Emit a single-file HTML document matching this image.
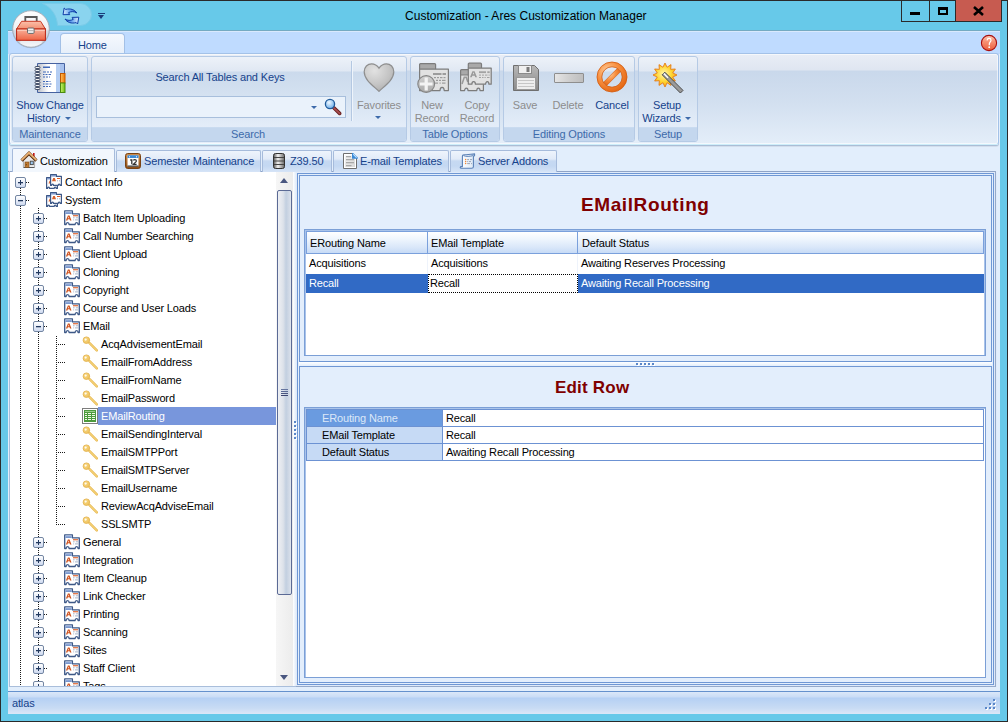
<!DOCTYPE html>
<html><head><meta charset="utf-8">
<style>
*{box-sizing:border-box;margin:0;padding:0}
html,body{width:1008px;height:722px;overflow:hidden}
body{position:relative;background:#67c9e9;font-family:"Liberation Sans",sans-serif;font-size:11px;color:#000;letter-spacing:-0.15px}
.a{position:absolute}
.t{position:absolute;white-space:nowrap;line-height:13px}
.grp{position:absolute;top:56px;height:86px;border:1px solid #b5cae5;border-radius:3px;background:linear-gradient(#edf2f9 0,#e0e8f3 14px,#cbdaec 15px,#d5e2f1 40px,#e4edf9 70px)}
.gl{position:absolute;left:0;right:0;bottom:0;height:14px;background:#c4d7ee;border-top:1px solid #c9dbf0;border-radius:0 0 2px 2px}
.glt{position:absolute;left:0;right:0;bottom:0px;text-align:center;color:#3d6aaa;line-height:13px;white-space:nowrap}
.bt{position:absolute;white-space:nowrap;line-height:13px;color:#15428b;text-align:center}
.dis{color:#8d8d8d}
.dtab{position:absolute;top:150px;height:22px;border:1px solid #a6bbdb;border-bottom:none;border-radius:2px 2px 0 0;background:linear-gradient(#eef4fc 0,#e2ebf8 8px,#c6d9f2 10px,#c4d8f2 15px,#d6e4f7 21px)}
.dtt{position:absolute;top:155px;white-space:nowrap;line-height:13px;color:#15428b}
.dv{position:absolute;width:1px;background:repeating-linear-gradient(#1a1a1a 0 1px,transparent 1px 2px)}
.dh{position:absolute;height:1px;background:repeating-linear-gradient(90deg,#1a1a1a 0 1px,transparent 1px 2px)}
.bx{position:absolute;width:11px;height:11px;border:1px solid #7386a2;border-radius:2px;background:linear-gradient(#ffffff,#cfdaf0)}
.bx .ph{position:absolute;left:2px;top:4px;width:5px;height:1px;background:#22395f;box-shadow:0 0.3px 0 #22395f}
.bx .pv{position:absolute;left:4px;top:2px;width:1px;height:5px;background:#22395f}
.ic{position:absolute}
.tt{position:absolute;white-space:nowrap;line-height:13px}
.sel{position:absolute;height:18px;background:#7896dc}


</style></head><body>
<!-- frame borders -->
<div class="a" style="left:0;top:0;width:1008px;height:1px;background:#2a2a2a"></div>
<div class="a" style="left:0;top:0;width:1px;height:722px;background:#2a2a2a"></div>
<div class="a" style="left:1007px;top:0;width:1px;height:722px;background:#2a2a2a"></div>
<div class="a" style="left:0;top:721px;width:1008px;height:1px;background:#2a2a2a"></div>

<!-- title -->
<div class="t" style="left:405px;top:10px;font-size:12px;color:#000;letter-spacing:0.02px">Customization - Ares Customization Manager</div>

<!-- window buttons -->
<div class="a" style="left:901px;top:0;width:29px;height:22px;border:1px solid #2a2a2a;border-top:none"></div>
<div class="a" style="left:929px;top:0;width:27px;height:22px;border:1px solid #2a2a2a;border-top:none;border-left:none"></div>
<div class="a" style="left:955px;top:0;width:47px;height:22px;background:#c75b50;border:1px solid #2a2a2a;border-top:none"></div>


<div class="a" style="left:910px;top:12px;width:10px;height:3px;background:#000"></div>
<div class="a" style="left:938px;top:7px;width:10px;height:8px;border:2px solid #000;border-top-width:3px"></div>
<svg class="a" style="left:973px;top:6px" width="11" height="10" viewBox="0 0 11 10"><path d="M1 1l9 8M10 1L1 9" stroke="#000" stroke-width="2.6"/></svg>
<!-- client -->
<div class="a" style="left:8px;top:31px;width:992px;height:683px;background:#e2eefc"></div>
<!-- ribbon tab strip -->
<div class="a" style="left:8px;top:31px;width:992px;height:23px;background:#bfdbff"></div>


<!-- ribbon tab strip light top line -->
<div class="a" style="left:8px;top:30px;width:992px;height:1px;background:#74aac2"></div>
<div class="a" style="left:8px;top:31px;width:992px;height:1px;background:#d9e9fd"></div>
<!-- QAT pill -->
<svg class="a" style="left:0;top:0" width="100" height="30" viewBox="0 0 100 30"><path d="M42.4 3.5H80.5A11 11 0 0 1 80.5 25.5H57.5C57 16 52 7.5 42.4 3.5Z" fill="#8ad4ef" stroke="#7acbe8" stroke-width="1"/></svg>
<!-- app orb -->
<svg class="a" style="left:11px;top:9px" width="40" height="40" viewBox="0 0 40 40">
 <defs>
  <linearGradient id="orb" x1="0" y1="0" x2="0" y2="1"><stop offset="0" stop-color="#ffffff"/><stop offset=".5" stop-color="#eef1f4"/><stop offset=".55" stop-color="#d4dbe4"/><stop offset=".8" stop-color="#c7d0dc"/><stop offset="1" stop-color="#f0f3f6"/></linearGradient>
 </defs>
 <circle cx="20" cy="20.5" r="18.8" fill="#7f8fa3" opacity=".45"/>
 <circle cx="20" cy="20" r="18.3" fill="url(#orb)" stroke="#a7b0bb" stroke-width="1"/>
 <ellipse cx="20" cy="33" rx="11" ry="4" fill="#ffffff" opacity=".55"/>
</svg>
<svg class="a" style="left:14px;top:13px" width="34" height="32" viewBox="0 0 34 32">
 <defs><linearGradient id="tbg" x1="0" y1="0" x2="0" y2="1"><stop offset="0" stop-color="#f9b09a"/><stop offset="1" stop-color="#ee6444"/></linearGradient>
 <linearGradient id="tbl" x1="0" y1="0" x2="0" y2="1"><stop offset="0" stop-color="#fbc0aa"/><stop offset="1" stop-color="#f39072"/></linearGradient></defs>
 <path d="M11.3 8.5V4H22.7V8.5" fill="none" stroke="#5a5a5a" stroke-width="1.8"/>
 <path d="M2.6 16L7.6 8.3H26.6L31.4 16Z" fill="url(#tbl)" stroke="#c83a24" stroke-width="1"/>
 <rect x="2.6" y="16" width="28.8" height="11.3" fill="url(#tbg)" stroke="#b8200f" stroke-width="1"/>
 <line x1="3.2" y1="17.3" x2="30.8" y2="17.3" stroke="#fcd0c0" stroke-width="1"/>
 <rect x="13.5" y="15" width="6.6" height="5.4" rx="1" fill="#f4f4f4" stroke="#6a6a6a" stroke-width="1"/>
 <line x1="14" y1="17.7" x2="19.6" y2="17.7" stroke="#9a9a9a" stroke-width=".8"/>
</svg>
<!-- refresh icon -->
<svg class="a" style="left:62px;top:7px" width="18" height="19" viewBox="0 0 18 19">
 <defs><linearGradient id="rf" x1="0" y1="0" x2="1" y2="0"><stop offset="0" stop-color="#d8ecff"/><stop offset=".5" stop-color="#6aa6ee"/><stop offset="1" stop-color="#2a62c8"/></linearGradient>
 <linearGradient id="rf2" x1="1" y1="0" x2="0" y2="0"><stop offset="0" stop-color="#d8ecff"/><stop offset=".5" stop-color="#6aa6ee"/><stop offset="1" stop-color="#2a62c8"/></linearGradient></defs>
 <path d="M2.2 1 L1 7.7 L7.7 7.6 L6.6 5.6 C9 4.2 12.5 4.3 14.8 6 C12.5 2.5 8.5 1.2 3.6 2.4 Z" fill="url(#rf)" stroke="#0f3ea8" stroke-width="1" stroke-linejoin="round"/>
 <path d="M15.6 17 L16.8 10.2 L10.1 10.4 L11.2 12.4 C8.8 13.8 5.3 13.7 3 12 C5.3 15.5 9.3 16.8 14.2 15.6 Z" fill="url(#rf2)" stroke="#0f3ea8" stroke-width="1" stroke-linejoin="round"/>
</svg>
<!-- qat dropdown -->
<div class="a" style="left:98px;top:13px;width:7px;height:1px;background:#1a3c7a"></div>
<div class="a" style="left:98px;top:15px;width:0;height:0;border-left:3.5px solid transparent;border-right:3.5px solid transparent;border-top:4px solid #1a3c7a"></div>

<!-- Home tab -->
<div class="a" style="left:60px;top:33px;width:65px;height:22px;border:1px solid #a3c0e6;border-bottom:none;border-radius:4px 4px 0 0;background:linear-gradient(#f5f9fe,#e6eef9)"></div>
<div class="t" style="left:78px;top:39px;color:#15428b">Home</div>

<!-- help icon -->
<svg class="a" style="left:980px;top:34px" width="18" height="18" viewBox="0 0 18 18">
 <defs><linearGradient id="hg" x1="0" y1="0" x2="0" y2="1"><stop offset="0" stop-color="#ffd0bc"/><stop offset=".35" stop-color="#f8967a"/><stop offset="1" stop-color="#ec5c3a"/></linearGradient></defs>
 <circle cx="9" cy="9" r="7.6" fill="url(#hg)" stroke="#a80e0e" stroke-width="1.1"/>
 <path d="M7 6.3C7.2 5 8 4.4 9.1 4.4S11 5.1 11 6.2c0 1.5-1.7 1.9-1.7 3.9v1.2" fill="none" stroke="#fff" stroke-width="1.2"/>
 <circle cx="9.2" cy="13.2" r=".9" fill="#fff"/>
</svg>

<!-- ribbon panel -->
<div class="a" style="left:9px;top:53px;width:990px;height:92px;border:1px solid #a4c2e8;border-bottom-color:#cdeefa;border-radius:3px;box-shadow:inset 0 0 0 1px rgba(255,255,255,.6),0 1px 0 #aabdd6,0 2px 0 #d3deec;background:linear-gradient(#e9eef6 0,#dfe6f1 16px,#c9d8eb 17px,#d3e0f0 50px,#e4eef9 90px)"></div>


<!-- Maintenance group -->
<div class="grp" style="left:12px;width:76px"><div class="gl"><div class="glt">Maintenance</div></div></div>
<svg class="a" style="left:34px;top:62px" width="32" height="32" viewBox="0 0 32 32">
 <defs><linearGradient id="nb" x1="0" y1="0" x2="1" y2="0"><stop offset="0" stop-color="#b9bec8"/><stop offset=".4" stop-color="#ffffff"/><stop offset="1" stop-color="#ffffff"/></linearGradient>
 <linearGradient id="nbo" x1="0" y1="0" x2="1" y2="0"><stop offset="0" stop-color="#ffc060"/><stop offset="1" stop-color="#f07800"/></linearGradient>
 <linearGradient id="nbg" x1="0" y1="0" x2="1" y2="0"><stop offset="0" stop-color="#c8f070"/><stop offset="1" stop-color="#70c010"/></linearGradient></defs>
 <path d="M3.5 1.5H30.5V11H26V30.5H3.5Z" fill="url(#nb)" stroke="#4662a0" stroke-width="1"/>
 <rect x="22" y="2" width="4" height="28" fill="#b4cdf2"/>
 <rect x="26" y="2" width="4" height="9" fill="#a8c2ee"/>
 <rect x="26.5" y="11.5" width="4.5" height="9.5" fill="url(#nbo)" stroke="#c25a00" stroke-width="1"/>
 <rect x="26.5" y="21" width="4.5" height="9.5" fill="url(#nbg)" stroke="#4a8a10" stroke-width="1"/>
 <g fill="#f4f4f4" stroke="#3a4660" stroke-width=".9">
  <rect x="1" y="4.5" width="5" height="2" rx="1"/><rect x="1" y="7.5" width="5" height="2" rx="1"/><rect x="1" y="10.5" width="5" height="2" rx="1"/><rect x="1" y="13.5" width="5" height="2" rx="1"/><rect x="1" y="16.5" width="5" height="2" rx="1"/><rect x="1" y="19.5" width="5" height="2" rx="1"/><rect x="1" y="22.5" width="5" height="2" rx="1"/><rect x="1" y="25.5" width="5" height="2" rx="1"/>
 </g>
 <g fill="#3f68b8"><rect x="9" y="4.5" width="7" height="1.5"/>
  <rect x="9" y="9.5" width="3" height="1"/><rect x="13" y="9.5" width="2" height="1"/><rect x="16" y="9.5" width="2" height="1"/>
  <rect x="9" y="12" width="1.5" height="1"/><rect x="11.5" y="12" width="2" height="1"/><rect x="14.5" y="12" width="2.5" height="1"/>
  <rect x="9" y="14.5" width="2" height="1"/><rect x="12" y="14.5" width="2" height="1"/><rect x="15" y="14.5" width="1" height="1"/>
  <rect x="9" y="19" width="2" height="1"/><rect x="12" y="19" width="2.5" height="1"/><rect x="15.5" y="19" width="1" height="1"/>
  <rect x="9" y="21.5" width="1.5" height="1"/><rect x="11.5" y="21.5" width="3" height="1"/><rect x="15.5" y="21.5" width="2" height="1"/>
  <rect x="9" y="24" width="2" height="1"/><rect x="12" y="24" width="2" height="1"/><rect x="15" y="24" width="1.5" height="1"/>
 </g>
</svg>
<div class="bt" style="left:12px;width:76px;top:99px">Show Change</div>
<div class="bt" style="left:26px;width:35px;top:112px">History</div>
<div class="a" style="left:65px;top:117px;width:0;height:0;border-left:3px solid transparent;border-right:3px solid transparent;border-top:3px solid #3d6aaa"></div>

<!-- Search group -->
<div class="grp" style="left:91px;width:316px"><div class="gl"><div class="glt" style="left:0;width:312px">Search</div></div></div>
<div class="bt" style="left:100px;width:240px;top:71px">Search All Tables and Keys</div>
<div class="a" style="left:96px;top:96px;width:250px;height:22px;border:1px solid #a8bfdc;background:#eaf2fb"></div>
<div class="a" style="left:311px;top:106px;width:0;height:0;border-left:3px solid transparent;border-right:3px solid transparent;border-top:3px solid #3d6aaa"></div>
<svg class="a" style="left:324px;top:98px" width="18" height="18" viewBox="0 0 18 18">
 <defs><radialGradient id="mg" cx=".4" cy=".35" r=".65"><stop offset="0" stop-color="#f0f8ff"/><stop offset="1" stop-color="#6fb0ea"/></radialGradient>
 <linearGradient id="mh" x1="0" y1="0" x2="1" y2="0"><stop offset="0" stop-color="#c88080"/><stop offset="1" stop-color="#7a2a2a"/></linearGradient></defs>
 <path d="M9.8 9.8L15.6 15.4" stroke="#6a2020" stroke-width="3.6" stroke-linecap="round"/>
 <path d="M9.8 9.8L15.6 15.4" stroke="#a85050" stroke-width="1.6" stroke-linecap="round"/>
 <circle cx="6" cy="6" r="4.6" fill="url(#mg)" stroke="#1f5a9a" stroke-width="1.3"/>
</svg>
<div class="a" style="left:351px;top:61px;width:1px;height:60px;background:#b4c8e2"></div>
<div class="a" style="left:352px;top:61px;width:1px;height:60px;background:#eef4fb"></div>
<svg class="a" style="left:362px;top:62px" width="34" height="30" viewBox="0 0 34 30">
 <defs><radialGradient id="hgr" cx=".35" cy=".25" r=".85"><stop offset="0" stop-color="#e2e2e2"/><stop offset=".6" stop-color="#c4c4c4"/><stop offset="1" stop-color="#aaaaaa"/></radialGradient></defs>
 <path d="M17 29.4C11.5 24 2.2 18 2.2 9.8 2.2 5 5.6 1.8 9.6 1.8c3.2 0 5.7 1.8 7.4 4.3C18.7 3.6 21.2 1.8 24.4 1.8c4 0 7.4 3.2 7.4 8 0 8.2-9.3 14.2-14.8 19.6z" fill="url(#hgr)" stroke="#8e8e8e" stroke-width="1.2"/>
</svg>
<div class="bt dis" style="left:354px;width:50px;top:99px">Favorites</div>
<div class="a" style="left:375px;top:116px;width:0;height:0;border-left:3px solid transparent;border-right:3px solid transparent;border-top:3px solid #3d6aaa"></div>

<!-- Table Options -->
<div class="grp" style="left:410px;width:90px"><div class="gl"><div class="glt">Table Options</div></div></div>
<svg class="a" style="left:416px;top:62px" width="34" height="34" viewBox="0 0 34 34">
 <defs><linearGradient id="pc" x1="0" y1="0" x2="0" y2="1"><stop offset="0" stop-color="#d2d2d2"/><stop offset="1" stop-color="#a9a9a9"/></linearGradient></defs>
 <path d="M3.6 7.5V2.6Q3.6 1.6 4.6 1.6H18.6Q19.6 1.6 19.6 2.6V7.5" fill="#a9a9a9" stroke="#7c7c7c" stroke-width="1.2"/>
 <path d="M3.6 7.2H32.4V28.6H28.2C28.2 24.2 24 24.2 24 28.6H3.6Z" fill="#e2e2e2" stroke="#7c7c7c" stroke-width="1.2" stroke-linejoin="round"/>
 <g fill="#9c9c9c"><rect x="17" y="11" width="8.5" height="2"/><rect x="26.5" y="11" width="3.5" height="2"/>
 <rect x="18" y="15" width="2" height="1.2"/><rect x="21" y="15" width="2" height="1.2"/><rect x="24" y="15" width="2.5" height="1.2"/><rect x="27.5" y="15" width="2" height="1.2"/>
 <rect x="20" y="17.8" width="2" height="1.2"/><rect x="23" y="17.8" width="2" height="1.2"/><rect x="26" y="17.8" width="3.5" height="1.2"/>
 <rect x="19" y="20.5" width="3" height="1.2"/><rect x="23.5" y="20.5" width="1.2" height="1.2"/><rect x="26" y="20.5" width="3.5" height="1.2"/></g>
 <circle cx="10.2" cy="22" r="8.4" fill="url(#pc)" stroke="#858585" stroke-width="1.1"/>
 <path d="M8.6 15.6H11.8V20.4H16.6V23.6H11.8V28.4H8.6V23.6H3.8V20.4H8.6Z" fill="#f4f4f4"/>
</svg>
<svg class="a" style="left:459px;top:62px" width="34" height="32" viewBox="0 0 34 32">
 <path d="M1.6 13.2V8.6Q1.6 7.6 2.6 7.6H9.6V13.2" fill="#a9a9a9" stroke="#7c7c7c" stroke-width="1.2"/>
 <path d="M1.6 13H24.4V28.6H21C21 25.4 17.8 25.4 17.8 28.6H9C9 25.4 5.6 25.4 5.6 28.6H1.6Z" fill="#e2e2e2" stroke="#7c7c7c" stroke-width="1.2" stroke-linejoin="round"/>
 <path d="M3 22L5.3 15.3H7.2L8.8 20" fill="none" stroke="#9a9a9a" stroke-width="1.6"/>
 <path d="M9.3 6.2V2.2Q9.3 1.2 10.3 1.2H21.5Q22.5 1.2 22.5 2.2V6.2" fill="#a9a9a9" stroke="#7c7c7c" stroke-width="1.2"/>
 <path d="M9.3 6.1H32.2V22.2H29.9C29.9 18.8 26.6 18.8 26.6 22.2H16.4C16.4 18.8 12.9 18.8 12.9 22.2H9.3Z" fill="#e2e2e2" stroke="#7c7c7c" stroke-width="1.2" stroke-linejoin="round"/>
 <path d="M11 15.2L13.4 9.2H15.6L18 15.2H16.2L15.7 13.8H13.3L12.8 15.2ZM13.8 12.3H15.2L14.5 10.3Z" fill="#9a9a9a"/>
 <g fill="#a2a2a2"><rect x="20" y="9.3" width="7" height="1.8"/><rect x="28.3" y="9.3" width="2.4" height="1.8"/>
 <rect x="20" y="12.6" width="2" height="1"/><rect x="23" y="12.6" width="2" height="1"/><rect x="26" y="12.6" width="2.5" height="1"/><rect x="29.5" y="12.6" width="1.2" height="1"/>
 <rect x="20" y="15" width="2" height="1"/><rect x="23" y="15" width="1.5" height="1"/><rect x="25.5" y="15" width="1.2" height="1"/><rect x="28" y="15" width="2.5" height="1"/></g>
</svg>
<div class="bt dis" style="left:412px;width:40px;top:99px">New</div>
<div class="bt dis" style="left:412px;width:40px;top:112px">Record</div>
<div class="bt dis" style="left:457px;width:40px;top:99px">Copy</div>
<div class="bt dis" style="left:457px;width:40px;top:112px">Record</div>

<!-- Editing Options -->
<div class="grp" style="left:503px;width:132px"><div class="gl"><div class="glt">Editing Options</div></div></div>
<svg class="a" style="left:512px;top:64px" width="28" height="28" viewBox="0 0 28 28">
 <defs><linearGradient id="fl" x1="0" y1="0" x2="0" y2="1"><stop offset="0" stop-color="#b8b8b8"/><stop offset="1" stop-color="#8a8a8a"/></linearGradient></defs>
 <path d="M1.5 1.5h21l4 4v21h-25z" fill="url(#fl)" stroke="#6f6f6f" stroke-width="1"/>
 <rect x="6.5" y="1.5" width="13" height="8" fill="#f0f0f0" stroke="#8a8a8a" stroke-width="1"/>
 <rect x="14.5" y="3" width="3" height="5" fill="#7a7a7a"/>
 <rect x="4.5" y="13.5" width="19" height="12" fill="#eeeeee" stroke="#9a9a9a" stroke-width="1"/>
 <g fill="#c6c6c6"><rect x="6" y="16" width="16" height="1"/><rect x="6" y="19" width="16" height="1"/><rect x="6" y="22" width="16" height="1"/></g>
</svg>
<div class="a" style="left:554px;top:73px;width:30px;height:10px;border:1px solid #8e8e8e;border-radius:1px;background:linear-gradient(100deg,#e6e6e6,#cfcfcf 50%,#bdbdbd)"></div>
<svg class="a" style="left:596px;top:61px" width="32" height="32" viewBox="0 0 32 32">
 <defs><radialGradient id="cg" cx=".35" cy=".3" r=".8"><stop offset="0" stop-color="#ffd0a0"/><stop offset=".45" stop-color="#f89040"/><stop offset="1" stop-color="#e0600c"/></radialGradient></defs>
 <path d="M16 1A15 15 0 1 0 16 31A15 15 0 1 0 16 1ZM16 5.8A10.2 10.2 0 1 1 16 26.2A10.2 10.2 0 1 1 16 5.8Z" fill="url(#cg)" fill-rule="evenodd" stroke="#d2580a" stroke-width=".8"/>
 <path d="M7.6 21.2L21.2 7.6L24.4 10.8L10.8 24.4Z" fill="url(#cg)" stroke="#d2580a" stroke-width=".6"/>
</svg>
<div class="bt dis" style="left:505px;width:40px;top:99px">Save</div>
<div class="bt dis" style="left:547px;width:42px;top:99px">Delete</div>
<div class="bt" style="left:591px;width:42px;top:99px">Cancel</div>

<!-- Setup -->
<div class="grp" style="left:638px;width:60px"><div class="gl"><div class="glt">Setup</div></div></div>
<svg class="a" style="left:651px;top:62px" width="34" height="32" viewBox="0 0 34 32">
 <defs><radialGradient id="sg" cx=".45" cy=".45" r=".6"><stop offset="0" stop-color="#fff8b0"/><stop offset=".55" stop-color="#ffd530"/><stop offset="1" stop-color="#f5a010"/></radialGradient></defs>
 <path d="M14.00 1.00L16.07 5.27L20.00 2.61L19.66 7.34L24.39 7.00L21.73 10.93L26.00 13.00L21.73 15.07L24.39 19.00L19.66 18.66L20.00 23.39L16.07 20.73L14.00 25.00L11.93 20.73L8.00 23.39L8.34 18.66L3.61 19.00L6.27 15.07L2.00 13.00L6.27 10.93L3.61 7.00L8.34 7.34L8.00 2.61L11.93 5.27Z" fill="url(#sg)" stroke="#e47a18" stroke-width=".9" stroke-linejoin="round"/>
 <path d="M11.2 12.8L13.8 10.2L32 28.4L29.4 31Z" fill="#9a9a9a" stroke="#4a4a4a" stroke-width="1"/>
 <path d="M12.3 12.1L13.3 11.1L17.5 15.3L16.5 16.3Z" fill="#ffffff"/>
</svg>
<div class="bt" style="left:638px;width:58px;top:99px">Setup</div>
<div class="bt" style="left:642px;width:39px;top:112px">Wizards</div>
<div class="a" style="left:685px;top:117px;width:0;height:0;border-left:3px solid transparent;border-right:3px solid transparent;border-top:3px solid #3d6aaa"></div>

<!-- doc tab strip area -->


<!-- doc tabs -->
<div class="a" style="left:8px;top:171px;width:988px;height:1px;background:#8fa3c6"></div>
<div class="a" style="left:12px;top:148px;width:103px;height:24px;border:1px solid #a6bbdb;border-bottom:none;border-radius:2px 2px 0 0;background:#f2f7fd"></div>
<svg class="a" style="left:20px;top:151px" width="18" height="18" viewBox="0 0 18 18">
 <rect x="13" y="2" width="1.6" height="5" fill="#c41414"/>
 <path d="M3.2 8.6L9 3.2L14.8 8.6V16.5H3.2Z" fill="#ebebeb"/>
 <path d="M3.4 16.5H14.6" stroke="#5a5a5a" stroke-width="1"/>
 <path d="M3.4 8.6V16.2M14.6 8.6V16.2" stroke="#9a9a9a" stroke-width=".8"/>
 <path d="M1.6 9.6L9 2.3L16.4 9.6" fill="none" stroke="#5a3010" stroke-width="3.2" stroke-linejoin="miter"/>
 <path d="M1.6 9.1L9 1.8L16.4 9.1" fill="none" stroke="#eab274" stroke-width="1.8" stroke-linejoin="miter"/>
 <rect x="5" y="11" width="4" height="5.5" fill="#c07a30" stroke="#7a4a18" stroke-width=".6"/>
 <rect x="5.8" y="13.4" width="1" height=".8" fill="#3a2208"/>
 <rect x="10.3" y="10.2" width="3" height="3.4" fill="#9cc8f0" stroke="#4a4a4a" stroke-width=".9"/>
</svg>
<div class="t" style="left:40px;top:155px;color:#000">Customization</div>

<div class="dtab" style="left:116px;width:145px"></div>
<svg class="a" style="left:125px;top:153px" width="16" height="16" viewBox="0 0 16 16">
 <defs><linearGradient id="calg" x1="0" y1="0" x2="0" y2="1"><stop offset="0" stop-color="#d09050"/><stop offset="1" stop-color="#8a4a14"/></linearGradient></defs>
 <rect x=".5" y=".5" width="15" height="15" rx="2.2" fill="url(#calg)" stroke="#7a4212" stroke-width="1"/>
 <rect x="2.5" y="2.5" width="11" height="11" fill="#ffffff"/>
 <rect x="2.5" y="2.3" width="11" height="2.8" rx=".6" fill="#3a8ad8"/>
 <rect x="4" y="3.3" width="1" height="1" fill="#fff"/><rect x="11" y="3.3" width="1" height="1" fill="#fff"/>
 <rect x="2.5" y="12.5" width="11" height="1.2" fill="#3a3a3a"/>
 <path d="M5.2 7h1.6v4.3" fill="none" stroke="#333" stroke-width="1.3"/>
 <path d="M8.3 7.4c.4-.6 1-.8 1.6-.8.9 0 1.5.5 1.5 1.3 0 1.2-1.9 1.8-3.1 3.4h3.3" fill="none" stroke="#333" stroke-width="1.2"/>
</svg>
<div class="dtt" style="left:144px">Semester Maintenance</div>

<div class="dtab" style="left:262px;width:70px"></div>
<svg class="a" style="left:271px;top:153px" width="16" height="16" viewBox="0 0 16 16">
 <defs><linearGradient id="db" x1="0" y1="0" x2="1" y2="0"><stop offset="0" stop-color="#555"/><stop offset=".4" stop-color="#f4f4f4"/><stop offset="1" stop-color="#666"/></linearGradient></defs>
 <rect x="2.5" y=".5" width="11" height="15" rx="2" fill="url(#db)" stroke="#333" stroke-width="1"/>
 <g stroke="#444" stroke-width="1"><line x1="3" y1="4.5" x2="13" y2="4.5"/><line x1="3" y1="8" x2="13" y2="8"/><line x1="3" y1="11.5" x2="13" y2="11.5"/></g>
</svg>
<div class="dtt" style="left:290px">Z39.50</div>

<div class="dtab" style="left:333px;width:116px"></div>
<svg class="a" style="left:342px;top:153px" width="16" height="16" viewBox="0 0 16 16">
 <defs><linearGradient id="dcg" x1="0" y1="0" x2="1" y2="1"><stop offset="0" stop-color="#f4f4f4"/><stop offset="1" stop-color="#d8d8d8"/></linearGradient></defs>
 <path d="M1.5 0.5H10.5L14.5 4.5V15.5H1.5Z" fill="#ffffff" stroke="#6e6e6e" stroke-width="1"/>
 <rect x="3" y="2.5" width="10" height="11.5" fill="url(#dcg)"/>
 <g fill="#a8a8a8"><rect x="4" y="3" width="5" height="1.3"/><rect x="4" y="6" width="8" height="1.3"/><rect x="4" y="9" width="8" height="1.3"/><rect x="4" y="12" width="5.5" height="1.3"/></g>
 <path d="M10 0H11.2L15.8 4.6V5.8H10Z" fill="#3a8ad8"/>
 <path d="M11.2 1.2L14.6 4.6" stroke="#c4e4ff" stroke-width="1.1"/>
</svg>
<div class="dtt" style="left:360px">E-mail Templates</div>

<div class="dtab" style="left:450px;width:107px"></div>
<svg class="a" style="left:459px;top:153px" width="17" height="16" viewBox="0 0 17 16">
 <defs><linearGradient id="scg" x1="0" y1="0" x2="1" y2="0"><stop offset="0" stop-color="#ffffff"/><stop offset="1" stop-color="#dce8f6"/></linearGradient></defs>
 <path d="M3.4 13.6V3.4C3.4 2.2 4.4 1.6 6 1.7C9.5 2 12.5 1 15.6 0.9V2.6C14.6 2.8 14.4 3.4 14.4 4.2V13.8C14.4 14.8 13.8 15.2 12.6 15.2H1.9C1.1 15.2 0.9 13.6 2.2 13.6Z" fill="url(#scg)" stroke="#5a80b6" stroke-width="1.1" stroke-linejoin="round"/>
 <path d="M4.5 2.6C7 3.8 11 3.4 14.4 2.6" fill="none" stroke="#5a80b6" stroke-width="1"/>
 <g fill="#f28a3a"><circle cx="6.6" cy="6.6" r=".75"/><circle cx="6.6" cy="8.6" r=".75"/><circle cx="6.6" cy="10.6" r=".75"/></g>
 <g fill="#9aa6b8"><rect x="8.2" y="6.1" width="1.8" height="1"/><rect x="11" y="6.1" width="2" height="1"/><rect x="8.2" y="8.1" width="1" height="1"/><rect x="10" y="8.1" width="2" height="1"/><rect x="8.2" y="10.1" width="2.8" height="1"/><rect x="12" y="10.1" width="1" height="1"/></g>
</svg>
<div class="dtt" style="left:478px">Server Addons</div>

<!-- tree panel -->
<div class="a" style="left:9px;top:171px;width:1px;height:516px;background:#a9bedb"></div>
<div class="a" style="left:9px;top:686px;width:287px;height:1px;background:#a9bedb"></div>
<div class="a" style="left:10px;top:172px;width:266px;height:514px;background:#fff;overflow:hidden">
<!--TREE-->
<div class="dv" style="left:10px;top:10px;height:518px"></div>
<div class="dv" style="left:28px;top:36px;height:492px"></div>
<div class="dv" style="left:46px;top:164px;height:189px"></div>
<div class="dh" style="left:16px;top:10px;width:3px"></div>
<div class="bx" style="left:5px;top:5px"><i class="ph"></i><i class="pv"></i></div>
<svg class="ic" style="left:36px;top:2px" width="16" height="16" viewBox="0 0 16 16">
   <path d="M0.6 3.6H4.8V5.2H11.4V14.4H10.2C10.2 12.6 8.2 12.6 8.2 14.4H3.6C3.6 12.6 1.6 12.6 1.6 14.4H0.6Z" fill="#fff" stroke="#3d5887" stroke-width="1.2" stroke-linejoin="round"/>
   <rect x="1.2" y="4.2" width="3" height="1.2" fill="#6d8cc8"/>
   <path d="M2.5 9.5L3.5 6.8H4.5L4.5 9.5Z" fill="#d86a3a"/>
   <path d="M4.6 0.6H10.4V2.4H15.4V11.4H14.2C14.2 9.6 12.2 9.6 12.2 11.4H7.6C7.6 9.6 5.6 9.6 5.6 11.4H4.6Z" fill="#fff" stroke="#3d5887" stroke-width="1.2" stroke-linejoin="round"/>
   <rect x="5.2" y="1.2" width="4.6" height="1.3" fill="#6d8cc8"/>
   <path d="M6 7.3L7.2 4.1H8.8L10 7.3Z" fill="#d8602a"/>
   <rect x="11" y="4" width="3.4" height="1" fill="#dd5a22"/>
   <g fill="#a0abc0"><rect x="11" y="6.3" width="1" height="1"/><rect x="13" y="6.3" width="1" height="1"/></g>
  </svg>
<div class="tt" style="left:55px;top:4px">Contact Info</div>
<div class="dh" style="left:16px;top:28px;width:3px"></div>
<div class="bx" style="left:5px;top:23px"><i class="ph"></i></div>
<svg class="ic" style="left:36px;top:20px" width="16" height="16" viewBox="0 0 16 16">
   <path d="M0.6 3.6H4.8V5.2H11.4V14.4H10.2C10.2 12.6 8.2 12.6 8.2 14.4H3.6C3.6 12.6 1.6 12.6 1.6 14.4H0.6Z" fill="#fff" stroke="#3d5887" stroke-width="1.2" stroke-linejoin="round"/>
   <rect x="1.2" y="4.2" width="3" height="1.2" fill="#6d8cc8"/>
   <path d="M2.5 9.5L3.5 6.8H4.5L4.5 9.5Z" fill="#d86a3a"/>
   <path d="M4.6 0.6H10.4V2.4H15.4V11.4H14.2C14.2 9.6 12.2 9.6 12.2 11.4H7.6C7.6 9.6 5.6 9.6 5.6 11.4H4.6Z" fill="#fff" stroke="#3d5887" stroke-width="1.2" stroke-linejoin="round"/>
   <rect x="5.2" y="1.2" width="4.6" height="1.3" fill="#6d8cc8"/>
   <path d="M6 7.3L7.2 4.1H8.8L10 7.3Z" fill="#d8602a"/>
   <rect x="11" y="4" width="3.4" height="1" fill="#dd5a22"/>
   <g fill="#a0abc0"><rect x="11" y="6.3" width="1" height="1"/><rect x="13" y="6.3" width="1" height="1"/></g>
  </svg>
<div class="tt" style="left:55px;top:22px">System</div>
<div class="dh" style="left:34px;top:46px;width:3px"></div>
<div class="bx" style="left:23px;top:41px"><i class="ph"></i><i class="pv"></i></div>
<svg class="ic" style="left:54px;top:38px" width="16" height="16" viewBox="0 0 16 16"><g transform="translate(0,-0.8)">
   <path d="M0.7 1.7H8.4V4.6H15.3V15.3H14.1C14.1 12.8 11.1 12.8 11.1 15.3H5.1C5.1 12.8 2.1 12.8 2.1 15.3H0.7Z" fill="#fff" stroke="#3d5887" stroke-width="1.3" stroke-linejoin="round"/>
   <rect x="1.4" y="2.4" width="6.3" height="2.3" fill="url(#tabg)"/>
   <path d="M1.9 11.2L3.9 6.2H5.5L7.5 11.2H6L5.6 10.1H3.8L3.4 11.2ZM4.1 9H5.3L4.7 7.4Z" fill="#d0501a"/>
   <rect x="9" y="6" width="5" height="1.1" fill="#dd5a22"/>
   <g fill="#a9b4c8"><rect x="9" y="8.1" width="1.6" height="1"/><rect x="11.8" y="8.1" width="2.2" height="1"/><rect x="9.2" y="10.2" width="0.9" height="1"/><rect x="11" y="10.2" width="3" height="1"/></g>
  </g></svg>
<div class="tt" style="left:73px;top:40px">Batch Item Uploading</div>
<div class="dh" style="left:34px;top:64px;width:3px"></div>
<div class="bx" style="left:23px;top:59px"><i class="ph"></i><i class="pv"></i></div>
<svg class="ic" style="left:54px;top:56px" width="16" height="16" viewBox="0 0 16 16"><g transform="translate(0,-0.8)">
   <path d="M0.7 1.7H8.4V4.6H15.3V15.3H14.1C14.1 12.8 11.1 12.8 11.1 15.3H5.1C5.1 12.8 2.1 12.8 2.1 15.3H0.7Z" fill="#fff" stroke="#3d5887" stroke-width="1.3" stroke-linejoin="round"/>
   <rect x="1.4" y="2.4" width="6.3" height="2.3" fill="url(#tabg)"/>
   <path d="M1.9 11.2L3.9 6.2H5.5L7.5 11.2H6L5.6 10.1H3.8L3.4 11.2ZM4.1 9H5.3L4.7 7.4Z" fill="#d0501a"/>
   <rect x="9" y="6" width="5" height="1.1" fill="#dd5a22"/>
   <g fill="#a9b4c8"><rect x="9" y="8.1" width="1.6" height="1"/><rect x="11.8" y="8.1" width="2.2" height="1"/><rect x="9.2" y="10.2" width="0.9" height="1"/><rect x="11" y="10.2" width="3" height="1"/></g>
  </g></svg>
<div class="tt" style="left:73px;top:58px">Call Number Searching</div>
<div class="dh" style="left:34px;top:82px;width:3px"></div>
<div class="bx" style="left:23px;top:77px"><i class="ph"></i><i class="pv"></i></div>
<svg class="ic" style="left:54px;top:74px" width="16" height="16" viewBox="0 0 16 16"><g transform="translate(0,-0.8)">
   <path d="M0.7 1.7H8.4V4.6H15.3V15.3H14.1C14.1 12.8 11.1 12.8 11.1 15.3H5.1C5.1 12.8 2.1 12.8 2.1 15.3H0.7Z" fill="#fff" stroke="#3d5887" stroke-width="1.3" stroke-linejoin="round"/>
   <rect x="1.4" y="2.4" width="6.3" height="2.3" fill="url(#tabg)"/>
   <path d="M1.9 11.2L3.9 6.2H5.5L7.5 11.2H6L5.6 10.1H3.8L3.4 11.2ZM4.1 9H5.3L4.7 7.4Z" fill="#d0501a"/>
   <rect x="9" y="6" width="5" height="1.1" fill="#dd5a22"/>
   <g fill="#a9b4c8"><rect x="9" y="8.1" width="1.6" height="1"/><rect x="11.8" y="8.1" width="2.2" height="1"/><rect x="9.2" y="10.2" width="0.9" height="1"/><rect x="11" y="10.2" width="3" height="1"/></g>
  </g></svg>
<div class="tt" style="left:73px;top:76px">Client Upload</div>
<div class="dh" style="left:34px;top:100px;width:3px"></div>
<div class="bx" style="left:23px;top:95px"><i class="ph"></i><i class="pv"></i></div>
<svg class="ic" style="left:54px;top:92px" width="16" height="16" viewBox="0 0 16 16"><g transform="translate(0,-0.8)">
   <path d="M0.7 1.7H8.4V4.6H15.3V15.3H14.1C14.1 12.8 11.1 12.8 11.1 15.3H5.1C5.1 12.8 2.1 12.8 2.1 15.3H0.7Z" fill="#fff" stroke="#3d5887" stroke-width="1.3" stroke-linejoin="round"/>
   <rect x="1.4" y="2.4" width="6.3" height="2.3" fill="url(#tabg)"/>
   <path d="M1.9 11.2L3.9 6.2H5.5L7.5 11.2H6L5.6 10.1H3.8L3.4 11.2ZM4.1 9H5.3L4.7 7.4Z" fill="#d0501a"/>
   <rect x="9" y="6" width="5" height="1.1" fill="#dd5a22"/>
   <g fill="#a9b4c8"><rect x="9" y="8.1" width="1.6" height="1"/><rect x="11.8" y="8.1" width="2.2" height="1"/><rect x="9.2" y="10.2" width="0.9" height="1"/><rect x="11" y="10.2" width="3" height="1"/></g>
  </g></svg>
<div class="tt" style="left:73px;top:94px">Cloning</div>
<div class="dh" style="left:34px;top:118px;width:3px"></div>
<div class="bx" style="left:23px;top:113px"><i class="ph"></i><i class="pv"></i></div>
<svg class="ic" style="left:54px;top:110px" width="16" height="16" viewBox="0 0 16 16"><g transform="translate(0,-0.8)">
   <path d="M0.7 1.7H8.4V4.6H15.3V15.3H14.1C14.1 12.8 11.1 12.8 11.1 15.3H5.1C5.1 12.8 2.1 12.8 2.1 15.3H0.7Z" fill="#fff" stroke="#3d5887" stroke-width="1.3" stroke-linejoin="round"/>
   <rect x="1.4" y="2.4" width="6.3" height="2.3" fill="url(#tabg)"/>
   <path d="M1.9 11.2L3.9 6.2H5.5L7.5 11.2H6L5.6 10.1H3.8L3.4 11.2ZM4.1 9H5.3L4.7 7.4Z" fill="#d0501a"/>
   <rect x="9" y="6" width="5" height="1.1" fill="#dd5a22"/>
   <g fill="#a9b4c8"><rect x="9" y="8.1" width="1.6" height="1"/><rect x="11.8" y="8.1" width="2.2" height="1"/><rect x="9.2" y="10.2" width="0.9" height="1"/><rect x="11" y="10.2" width="3" height="1"/></g>
  </g></svg>
<div class="tt" style="left:73px;top:112px">Copyright</div>
<div class="dh" style="left:34px;top:136px;width:3px"></div>
<div class="bx" style="left:23px;top:131px"><i class="ph"></i><i class="pv"></i></div>
<svg class="ic" style="left:54px;top:128px" width="16" height="16" viewBox="0 0 16 16"><g transform="translate(0,-0.8)">
   <path d="M0.7 1.7H8.4V4.6H15.3V15.3H14.1C14.1 12.8 11.1 12.8 11.1 15.3H5.1C5.1 12.8 2.1 12.8 2.1 15.3H0.7Z" fill="#fff" stroke="#3d5887" stroke-width="1.3" stroke-linejoin="round"/>
   <rect x="1.4" y="2.4" width="6.3" height="2.3" fill="url(#tabg)"/>
   <path d="M1.9 11.2L3.9 6.2H5.5L7.5 11.2H6L5.6 10.1H3.8L3.4 11.2ZM4.1 9H5.3L4.7 7.4Z" fill="#d0501a"/>
   <rect x="9" y="6" width="5" height="1.1" fill="#dd5a22"/>
   <g fill="#a9b4c8"><rect x="9" y="8.1" width="1.6" height="1"/><rect x="11.8" y="8.1" width="2.2" height="1"/><rect x="9.2" y="10.2" width="0.9" height="1"/><rect x="11" y="10.2" width="3" height="1"/></g>
  </g></svg>
<div class="tt" style="left:73px;top:130px">Course and User Loads</div>
<div class="dh" style="left:34px;top:154px;width:3px"></div>
<div class="bx" style="left:23px;top:149px"><i class="ph"></i></div>
<svg class="ic" style="left:54px;top:146px" width="16" height="16" viewBox="0 0 16 16"><g transform="translate(0,-0.8)">
   <path d="M0.7 1.7H8.4V4.6H15.3V15.3H14.1C14.1 12.8 11.1 12.8 11.1 15.3H5.1C5.1 12.8 2.1 12.8 2.1 15.3H0.7Z" fill="#fff" stroke="#3d5887" stroke-width="1.3" stroke-linejoin="round"/>
   <rect x="1.4" y="2.4" width="6.3" height="2.3" fill="url(#tabg)"/>
   <path d="M1.9 11.2L3.9 6.2H5.5L7.5 11.2H6L5.6 10.1H3.8L3.4 11.2ZM4.1 9H5.3L4.7 7.4Z" fill="#d0501a"/>
   <rect x="9" y="6" width="5" height="1.1" fill="#dd5a22"/>
   <g fill="#a9b4c8"><rect x="9" y="8.1" width="1.6" height="1"/><rect x="11.8" y="8.1" width="2.2" height="1"/><rect x="9.2" y="10.2" width="0.9" height="1"/><rect x="11" y="10.2" width="3" height="1"/></g>
  </g></svg>
<div class="tt" style="left:73px;top:148px">EMail</div>
<div class="dh" style="left:46px;top:172px;width:9px"></div>
<svg class="ic" style="left:72px;top:164px" width="16" height="16" viewBox="0 0 16 16">
   
   <path d="M7.6 7.2L14.8 14.4" stroke="#e6b650" stroke-width="2.4" stroke-linecap="round"/>
   <path d="M7.6 7.2L14.8 14.4" stroke="#f6d47a" stroke-width="1.2" stroke-linecap="round"/>
   <circle cx="4.4" cy="4.2" r="3.3" fill="url(#kg)" stroke="#e2b04a" stroke-width=".8"/>
   <circle cx="3.7" cy="3.6" r="1.1" fill="#fffaf0"/>
  </svg>
<div class="tt" style="left:91px;top:166px">AcqAdvisementEmail</div>
<div class="dh" style="left:46px;top:190px;width:9px"></div>
<svg class="ic" style="left:72px;top:182px" width="16" height="16" viewBox="0 0 16 16">
   
   <path d="M7.6 7.2L14.8 14.4" stroke="#e6b650" stroke-width="2.4" stroke-linecap="round"/>
   <path d="M7.6 7.2L14.8 14.4" stroke="#f6d47a" stroke-width="1.2" stroke-linecap="round"/>
   <circle cx="4.4" cy="4.2" r="3.3" fill="url(#kg)" stroke="#e2b04a" stroke-width=".8"/>
   <circle cx="3.7" cy="3.6" r="1.1" fill="#fffaf0"/>
  </svg>
<div class="tt" style="left:91px;top:184px">EmailFromAddress</div>
<div class="dh" style="left:46px;top:208px;width:9px"></div>
<svg class="ic" style="left:72px;top:200px" width="16" height="16" viewBox="0 0 16 16">
   
   <path d="M7.6 7.2L14.8 14.4" stroke="#e6b650" stroke-width="2.4" stroke-linecap="round"/>
   <path d="M7.6 7.2L14.8 14.4" stroke="#f6d47a" stroke-width="1.2" stroke-linecap="round"/>
   <circle cx="4.4" cy="4.2" r="3.3" fill="url(#kg)" stroke="#e2b04a" stroke-width=".8"/>
   <circle cx="3.7" cy="3.6" r="1.1" fill="#fffaf0"/>
  </svg>
<div class="tt" style="left:91px;top:202px">EmailFromName</div>
<div class="dh" style="left:46px;top:226px;width:9px"></div>
<svg class="ic" style="left:72px;top:218px" width="16" height="16" viewBox="0 0 16 16">
   
   <path d="M7.6 7.2L14.8 14.4" stroke="#e6b650" stroke-width="2.4" stroke-linecap="round"/>
   <path d="M7.6 7.2L14.8 14.4" stroke="#f6d47a" stroke-width="1.2" stroke-linecap="round"/>
   <circle cx="4.4" cy="4.2" r="3.3" fill="url(#kg)" stroke="#e2b04a" stroke-width=".8"/>
   <circle cx="3.7" cy="3.6" r="1.1" fill="#fffaf0"/>
  </svg>
<div class="tt" style="left:91px;top:220px">EmailPassword</div>
<div class="dh" style="left:46px;top:244px;width:9px"></div>
<svg class="ic" style="left:72px;top:236px" width="16" height="16" viewBox="0 0 16 16"><rect x=".5" y=".5" width="15" height="15" fill="#fff" stroke="#7d7d7d" stroke-width="1"/><rect x="2" y="2" width="12" height="12" fill="#4c9a3c"/><rect x="3" y="3" width="10" height="1" fill="#9ccc8a"/><g fill="#f2f8e8"><rect x="3" y="5" width="2" height="1"/><rect x="6" y="5" width="3" height="1"/><rect x="10" y="5" width="3" height="1"/><rect x="3" y="7" width="2" height="1"/><rect x="6" y="7" width="3" height="1"/><rect x="10" y="7" width="3" height="1"/><rect x="3" y="9" width="2" height="1"/><rect x="6" y="9" width="3" height="1"/><rect x="10" y="9" width="3" height="1"/><rect x="3" y="11" width="2" height="1"/><rect x="6" y="11" width="3" height="1"/><rect x="10" y="11" width="3" height="1"/></g></svg>
<div class="sel" style="left:88px;top:235px;width:178px"></div>
<div class="tt" style="left:91px;top:238px;color:#fff">EMailRouting</div>
<div class="dh" style="left:46px;top:262px;width:9px"></div>
<svg class="ic" style="left:72px;top:254px" width="16" height="16" viewBox="0 0 16 16">
   
   <path d="M7.6 7.2L14.8 14.4" stroke="#e6b650" stroke-width="2.4" stroke-linecap="round"/>
   <path d="M7.6 7.2L14.8 14.4" stroke="#f6d47a" stroke-width="1.2" stroke-linecap="round"/>
   <circle cx="4.4" cy="4.2" r="3.3" fill="url(#kg)" stroke="#e2b04a" stroke-width=".8"/>
   <circle cx="3.7" cy="3.6" r="1.1" fill="#fffaf0"/>
  </svg>
<div class="tt" style="left:91px;top:256px">EmailSendingInterval</div>
<div class="dh" style="left:46px;top:280px;width:9px"></div>
<svg class="ic" style="left:72px;top:272px" width="16" height="16" viewBox="0 0 16 16">
   
   <path d="M7.6 7.2L14.8 14.4" stroke="#e6b650" stroke-width="2.4" stroke-linecap="round"/>
   <path d="M7.6 7.2L14.8 14.4" stroke="#f6d47a" stroke-width="1.2" stroke-linecap="round"/>
   <circle cx="4.4" cy="4.2" r="3.3" fill="url(#kg)" stroke="#e2b04a" stroke-width=".8"/>
   <circle cx="3.7" cy="3.6" r="1.1" fill="#fffaf0"/>
  </svg>
<div class="tt" style="left:91px;top:274px">EmailSMTPPort</div>
<div class="dh" style="left:46px;top:298px;width:9px"></div>
<svg class="ic" style="left:72px;top:290px" width="16" height="16" viewBox="0 0 16 16">
   
   <path d="M7.6 7.2L14.8 14.4" stroke="#e6b650" stroke-width="2.4" stroke-linecap="round"/>
   <path d="M7.6 7.2L14.8 14.4" stroke="#f6d47a" stroke-width="1.2" stroke-linecap="round"/>
   <circle cx="4.4" cy="4.2" r="3.3" fill="url(#kg)" stroke="#e2b04a" stroke-width=".8"/>
   <circle cx="3.7" cy="3.6" r="1.1" fill="#fffaf0"/>
  </svg>
<div class="tt" style="left:91px;top:292px">EmailSMTPServer</div>
<div class="dh" style="left:46px;top:316px;width:9px"></div>
<svg class="ic" style="left:72px;top:308px" width="16" height="16" viewBox="0 0 16 16">
   
   <path d="M7.6 7.2L14.8 14.4" stroke="#e6b650" stroke-width="2.4" stroke-linecap="round"/>
   <path d="M7.6 7.2L14.8 14.4" stroke="#f6d47a" stroke-width="1.2" stroke-linecap="round"/>
   <circle cx="4.4" cy="4.2" r="3.3" fill="url(#kg)" stroke="#e2b04a" stroke-width=".8"/>
   <circle cx="3.7" cy="3.6" r="1.1" fill="#fffaf0"/>
  </svg>
<div class="tt" style="left:91px;top:310px">EmailUsername</div>
<div class="dh" style="left:46px;top:334px;width:9px"></div>
<svg class="ic" style="left:72px;top:326px" width="16" height="16" viewBox="0 0 16 16">
   
   <path d="M7.6 7.2L14.8 14.4" stroke="#e6b650" stroke-width="2.4" stroke-linecap="round"/>
   <path d="M7.6 7.2L14.8 14.4" stroke="#f6d47a" stroke-width="1.2" stroke-linecap="round"/>
   <circle cx="4.4" cy="4.2" r="3.3" fill="url(#kg)" stroke="#e2b04a" stroke-width=".8"/>
   <circle cx="3.7" cy="3.6" r="1.1" fill="#fffaf0"/>
  </svg>
<div class="tt" style="left:91px;top:328px">ReviewAcqAdviseEmail</div>
<div class="dh" style="left:46px;top:352px;width:9px"></div>
<svg class="ic" style="left:72px;top:344px" width="16" height="16" viewBox="0 0 16 16">
   
   <path d="M7.6 7.2L14.8 14.4" stroke="#e6b650" stroke-width="2.4" stroke-linecap="round"/>
   <path d="M7.6 7.2L14.8 14.4" stroke="#f6d47a" stroke-width="1.2" stroke-linecap="round"/>
   <circle cx="4.4" cy="4.2" r="3.3" fill="url(#kg)" stroke="#e2b04a" stroke-width=".8"/>
   <circle cx="3.7" cy="3.6" r="1.1" fill="#fffaf0"/>
  </svg>
<div class="tt" style="left:91px;top:346px">SSLSMTP</div>
<div class="dh" style="left:34px;top:370px;width:3px"></div>
<div class="bx" style="left:23px;top:365px"><i class="ph"></i><i class="pv"></i></div>
<svg class="ic" style="left:54px;top:362px" width="16" height="16" viewBox="0 0 16 16"><g transform="translate(0,-0.8)">
   <path d="M0.7 1.7H8.4V4.6H15.3V15.3H14.1C14.1 12.8 11.1 12.8 11.1 15.3H5.1C5.1 12.8 2.1 12.8 2.1 15.3H0.7Z" fill="#fff" stroke="#3d5887" stroke-width="1.3" stroke-linejoin="round"/>
   <rect x="1.4" y="2.4" width="6.3" height="2.3" fill="url(#tabg)"/>
   <path d="M1.9 11.2L3.9 6.2H5.5L7.5 11.2H6L5.6 10.1H3.8L3.4 11.2ZM4.1 9H5.3L4.7 7.4Z" fill="#d0501a"/>
   <rect x="9" y="6" width="5" height="1.1" fill="#dd5a22"/>
   <g fill="#a9b4c8"><rect x="9" y="8.1" width="1.6" height="1"/><rect x="11.8" y="8.1" width="2.2" height="1"/><rect x="9.2" y="10.2" width="0.9" height="1"/><rect x="11" y="10.2" width="3" height="1"/></g>
  </g></svg>
<div class="tt" style="left:73px;top:364px">General</div>
<div class="dh" style="left:34px;top:388px;width:3px"></div>
<div class="bx" style="left:23px;top:383px"><i class="ph"></i><i class="pv"></i></div>
<svg class="ic" style="left:54px;top:380px" width="16" height="16" viewBox="0 0 16 16"><g transform="translate(0,-0.8)">
   <path d="M0.7 1.7H8.4V4.6H15.3V15.3H14.1C14.1 12.8 11.1 12.8 11.1 15.3H5.1C5.1 12.8 2.1 12.8 2.1 15.3H0.7Z" fill="#fff" stroke="#3d5887" stroke-width="1.3" stroke-linejoin="round"/>
   <rect x="1.4" y="2.4" width="6.3" height="2.3" fill="url(#tabg)"/>
   <path d="M1.9 11.2L3.9 6.2H5.5L7.5 11.2H6L5.6 10.1H3.8L3.4 11.2ZM4.1 9H5.3L4.7 7.4Z" fill="#d0501a"/>
   <rect x="9" y="6" width="5" height="1.1" fill="#dd5a22"/>
   <g fill="#a9b4c8"><rect x="9" y="8.1" width="1.6" height="1"/><rect x="11.8" y="8.1" width="2.2" height="1"/><rect x="9.2" y="10.2" width="0.9" height="1"/><rect x="11" y="10.2" width="3" height="1"/></g>
  </g></svg>
<div class="tt" style="left:73px;top:382px">Integration</div>
<div class="dh" style="left:34px;top:406px;width:3px"></div>
<div class="bx" style="left:23px;top:401px"><i class="ph"></i><i class="pv"></i></div>
<svg class="ic" style="left:54px;top:398px" width="16" height="16" viewBox="0 0 16 16"><g transform="translate(0,-0.8)">
   <path d="M0.7 1.7H8.4V4.6H15.3V15.3H14.1C14.1 12.8 11.1 12.8 11.1 15.3H5.1C5.1 12.8 2.1 12.8 2.1 15.3H0.7Z" fill="#fff" stroke="#3d5887" stroke-width="1.3" stroke-linejoin="round"/>
   <rect x="1.4" y="2.4" width="6.3" height="2.3" fill="url(#tabg)"/>
   <path d="M1.9 11.2L3.9 6.2H5.5L7.5 11.2H6L5.6 10.1H3.8L3.4 11.2ZM4.1 9H5.3L4.7 7.4Z" fill="#d0501a"/>
   <rect x="9" y="6" width="5" height="1.1" fill="#dd5a22"/>
   <g fill="#a9b4c8"><rect x="9" y="8.1" width="1.6" height="1"/><rect x="11.8" y="8.1" width="2.2" height="1"/><rect x="9.2" y="10.2" width="0.9" height="1"/><rect x="11" y="10.2" width="3" height="1"/></g>
  </g></svg>
<div class="tt" style="left:73px;top:400px">Item Cleanup</div>
<div class="dh" style="left:34px;top:424px;width:3px"></div>
<div class="bx" style="left:23px;top:419px"><i class="ph"></i><i class="pv"></i></div>
<svg class="ic" style="left:54px;top:416px" width="16" height="16" viewBox="0 0 16 16"><g transform="translate(0,-0.8)">
   <path d="M0.7 1.7H8.4V4.6H15.3V15.3H14.1C14.1 12.8 11.1 12.8 11.1 15.3H5.1C5.1 12.8 2.1 12.8 2.1 15.3H0.7Z" fill="#fff" stroke="#3d5887" stroke-width="1.3" stroke-linejoin="round"/>
   <rect x="1.4" y="2.4" width="6.3" height="2.3" fill="url(#tabg)"/>
   <path d="M1.9 11.2L3.9 6.2H5.5L7.5 11.2H6L5.6 10.1H3.8L3.4 11.2ZM4.1 9H5.3L4.7 7.4Z" fill="#d0501a"/>
   <rect x="9" y="6" width="5" height="1.1" fill="#dd5a22"/>
   <g fill="#a9b4c8"><rect x="9" y="8.1" width="1.6" height="1"/><rect x="11.8" y="8.1" width="2.2" height="1"/><rect x="9.2" y="10.2" width="0.9" height="1"/><rect x="11" y="10.2" width="3" height="1"/></g>
  </g></svg>
<div class="tt" style="left:73px;top:418px">Link Checker</div>
<div class="dh" style="left:34px;top:442px;width:3px"></div>
<div class="bx" style="left:23px;top:437px"><i class="ph"></i><i class="pv"></i></div>
<svg class="ic" style="left:54px;top:434px" width="16" height="16" viewBox="0 0 16 16"><g transform="translate(0,-0.8)">
   <path d="M0.7 1.7H8.4V4.6H15.3V15.3H14.1C14.1 12.8 11.1 12.8 11.1 15.3H5.1C5.1 12.8 2.1 12.8 2.1 15.3H0.7Z" fill="#fff" stroke="#3d5887" stroke-width="1.3" stroke-linejoin="round"/>
   <rect x="1.4" y="2.4" width="6.3" height="2.3" fill="url(#tabg)"/>
   <path d="M1.9 11.2L3.9 6.2H5.5L7.5 11.2H6L5.6 10.1H3.8L3.4 11.2ZM4.1 9H5.3L4.7 7.4Z" fill="#d0501a"/>
   <rect x="9" y="6" width="5" height="1.1" fill="#dd5a22"/>
   <g fill="#a9b4c8"><rect x="9" y="8.1" width="1.6" height="1"/><rect x="11.8" y="8.1" width="2.2" height="1"/><rect x="9.2" y="10.2" width="0.9" height="1"/><rect x="11" y="10.2" width="3" height="1"/></g>
  </g></svg>
<div class="tt" style="left:73px;top:436px">Printing</div>
<div class="dh" style="left:34px;top:460px;width:3px"></div>
<div class="bx" style="left:23px;top:455px"><i class="ph"></i><i class="pv"></i></div>
<svg class="ic" style="left:54px;top:452px" width="16" height="16" viewBox="0 0 16 16"><g transform="translate(0,-0.8)">
   <path d="M0.7 1.7H8.4V4.6H15.3V15.3H14.1C14.1 12.8 11.1 12.8 11.1 15.3H5.1C5.1 12.8 2.1 12.8 2.1 15.3H0.7Z" fill="#fff" stroke="#3d5887" stroke-width="1.3" stroke-linejoin="round"/>
   <rect x="1.4" y="2.4" width="6.3" height="2.3" fill="url(#tabg)"/>
   <path d="M1.9 11.2L3.9 6.2H5.5L7.5 11.2H6L5.6 10.1H3.8L3.4 11.2ZM4.1 9H5.3L4.7 7.4Z" fill="#d0501a"/>
   <rect x="9" y="6" width="5" height="1.1" fill="#dd5a22"/>
   <g fill="#a9b4c8"><rect x="9" y="8.1" width="1.6" height="1"/><rect x="11.8" y="8.1" width="2.2" height="1"/><rect x="9.2" y="10.2" width="0.9" height="1"/><rect x="11" y="10.2" width="3" height="1"/></g>
  </g></svg>
<div class="tt" style="left:73px;top:454px">Scanning</div>
<div class="dh" style="left:34px;top:478px;width:3px"></div>
<div class="bx" style="left:23px;top:473px"><i class="ph"></i><i class="pv"></i></div>
<svg class="ic" style="left:54px;top:470px" width="16" height="16" viewBox="0 0 16 16"><g transform="translate(0,-0.8)">
   <path d="M0.7 1.7H8.4V4.6H15.3V15.3H14.1C14.1 12.8 11.1 12.8 11.1 15.3H5.1C5.1 12.8 2.1 12.8 2.1 15.3H0.7Z" fill="#fff" stroke="#3d5887" stroke-width="1.3" stroke-linejoin="round"/>
   <rect x="1.4" y="2.4" width="6.3" height="2.3" fill="url(#tabg)"/>
   <path d="M1.9 11.2L3.9 6.2H5.5L7.5 11.2H6L5.6 10.1H3.8L3.4 11.2ZM4.1 9H5.3L4.7 7.4Z" fill="#d0501a"/>
   <rect x="9" y="6" width="5" height="1.1" fill="#dd5a22"/>
   <g fill="#a9b4c8"><rect x="9" y="8.1" width="1.6" height="1"/><rect x="11.8" y="8.1" width="2.2" height="1"/><rect x="9.2" y="10.2" width="0.9" height="1"/><rect x="11" y="10.2" width="3" height="1"/></g>
  </g></svg>
<div class="tt" style="left:73px;top:472px">Sites</div>
<div class="dh" style="left:34px;top:496px;width:3px"></div>
<div class="bx" style="left:23px;top:491px"><i class="ph"></i><i class="pv"></i></div>
<svg class="ic" style="left:54px;top:488px" width="16" height="16" viewBox="0 0 16 16"><g transform="translate(0,-0.8)">
   <path d="M0.7 1.7H8.4V4.6H15.3V15.3H14.1C14.1 12.8 11.1 12.8 11.1 15.3H5.1C5.1 12.8 2.1 12.8 2.1 15.3H0.7Z" fill="#fff" stroke="#3d5887" stroke-width="1.3" stroke-linejoin="round"/>
   <rect x="1.4" y="2.4" width="6.3" height="2.3" fill="url(#tabg)"/>
   <path d="M1.9 11.2L3.9 6.2H5.5L7.5 11.2H6L5.6 10.1H3.8L3.4 11.2ZM4.1 9H5.3L4.7 7.4Z" fill="#d0501a"/>
   <rect x="9" y="6" width="5" height="1.1" fill="#dd5a22"/>
   <g fill="#a9b4c8"><rect x="9" y="8.1" width="1.6" height="1"/><rect x="11.8" y="8.1" width="2.2" height="1"/><rect x="9.2" y="10.2" width="0.9" height="1"/><rect x="11" y="10.2" width="3" height="1"/></g>
  </g></svg>
<div class="tt" style="left:73px;top:490px">Staff Client</div>
<div class="dh" style="left:34px;top:514px;width:3px"></div>
<div class="bx" style="left:23px;top:509px"><i class="ph"></i><i class="pv"></i></div>
<svg class="ic" style="left:54px;top:506px" width="16" height="16" viewBox="0 0 16 16"><g transform="translate(0,-0.8)">
   <path d="M0.7 1.7H8.4V4.6H15.3V15.3H14.1C14.1 12.8 11.1 12.8 11.1 15.3H5.1C5.1 12.8 2.1 12.8 2.1 15.3H0.7Z" fill="#fff" stroke="#3d5887" stroke-width="1.3" stroke-linejoin="round"/>
   <rect x="1.4" y="2.4" width="6.3" height="2.3" fill="url(#tabg)"/>
   <path d="M1.9 11.2L3.9 6.2H5.5L7.5 11.2H6L5.6 10.1H3.8L3.4 11.2ZM4.1 9H5.3L4.7 7.4Z" fill="#d0501a"/>
   <rect x="9" y="6" width="5" height="1.1" fill="#dd5a22"/>
   <g fill="#a9b4c8"><rect x="9" y="8.1" width="1.6" height="1"/><rect x="11.8" y="8.1" width="2.2" height="1"/><rect x="9.2" y="10.2" width="0.9" height="1"/><rect x="11" y="10.2" width="3" height="1"/></g>
  </g></svg>
<div class="tt" style="left:73px;top:508px">Tags</div>
<!--/TREE-->
</div>
<!-- tree icon symbols -->
<svg width="0" height="0" style="position:absolute">
 <defs>
  <linearGradient id="tabg" x1="0" y1="0" x2="0" y2="1"><stop offset="0" stop-color="#a9c0e8"/><stop offset="1" stop-color="#5d7fc0"/></linearGradient>
  <linearGradient id="kg" x1="0" y1="0" x2="1" y2="1"><stop offset="0" stop-color="#fadc8a"/><stop offset="1" stop-color="#eec058"/></linearGradient>
  </defs>
</svg>

<!-- scrollbar -->
<div class="a" style="left:276px;top:172px;width:17px;height:514px;background:linear-gradient(90deg,#f6f6f6,#ececec)"></div>
<div class="a" style="left:280px;top:178px;width:0;height:0;border-left:4.5px solid transparent;border-right:4.5px solid transparent;border-bottom:5px solid #4a5780"></div>
<div class="a" style="left:277px;top:190px;width:15px;height:405px;border:1px solid #5b6a95;border-radius:2px;background:linear-gradient(90deg,#eef0f4 0,#dde2ea 40%,#c2cfe0 62%,#d4dce8 90%,#e4e8ef 100%)"></div>
<div class="a" style="left:281px;top:389px;width:7px;height:1px;background:#66759f;box-shadow:0 2px 0 #5b6a95,0 4px 0 #4a5580,0 6px 0 #3d4670"></div>
<div class="a" style="left:280px;top:675px;width:0;height:0;border-left:4.5px solid transparent;border-right:4.5px solid transparent;border-top:5px solid #4a5780"></div>

<!-- splitter area -->
<div class="a" style="left:293px;top:172px;width:4px;height:514px;background:linear-gradient(90deg,#ffffff,#d8e6f8)"></div>



<!-- right container -->
<div class="a" style="left:296px;top:172px;width:701px;height:515px;background:#dfeafa"></div>
<div class="a" style="left:995px;top:171px;width:1px;height:516px;background:#95a9c9"></div>
<div class="a" style="left:296px;top:686px;width:700px;height:1px;background:#95a9c9"></div>
<div class="a" style="left:297px;top:173px;width:697px;height:512px;border:1px solid #6f97d4;background:#e3eefc"></div>
<!-- top panel -->
<div class="a" style="left:299px;top:175px;width:693px;height:187px;border:1px solid #6f97d4;background:#e3eefc"></div>
<div class="t" style="left:581px;top:194px;font-size:19px;line-height:22px;font-weight:bold;color:#7f0000;letter-spacing:0.6px">EMailRouting</div>
<!-- grid -->
<div class="a" style="left:304px;top:229px;width:682px;height:127px;border:1px solid #7b9fd6;background:#fff"></div>
<div class="a" style="left:305px;top:230px;width:680px;height:125px;border:1px solid #a9c3ea;border-bottom:none"></div>
<div class="a" style="left:306px;top:231px;width:678px;height:23px;border:1px solid #7aa0dc;background:linear-gradient(#ffffff 0,#eef5fd 35%,#d8e6f9 75%,#c7dbf6 100%)"></div>
<div class="a" style="left:427px;top:231px;width:1px;height:23px;background:#7aa0dc"></div>
<div class="a" style="left:577px;top:231px;width:1px;height:23px;background:#7aa0dc"></div>
<div class="t" style="left:310px;top:237px">ERouting Name</div>
<div class="t" style="left:431px;top:237px">EMail Template</div>
<div class="t" style="left:582px;top:237px">Default Status</div>
<div class="a" style="left:427px;top:254px;width:1px;height:20px;background:#eef3fb"></div>
<div class="a" style="left:577px;top:254px;width:1px;height:20px;background:#eef3fb"></div>
<div class="t" style="left:309px;top:257px">Acquisitions</div>
<div class="t" style="left:431px;top:257px">Acquisitions</div>
<div class="t" style="left:581px;top:257px">Awaiting Reserves Processing</div>
<div class="a" style="left:306px;top:274px;width:678px;height:19px;background:#316ac5"></div>
<div class="a" style="left:428px;top:274px;width:150px;height:19px;background:#fff;border:1px dotted #000"></div>
<div class="t" style="left:309px;top:277px;color:#fff">Recall</div>
<div class="t" style="left:430px;top:277px">Recall</div>
<div class="t" style="left:581px;top:277px;color:#fff">Awaiting Recall Processing</div>

<!-- splitter dots -->
<div class="a" style="left:299px;top:362px;width:693px;height:4px;background:linear-gradient(#ffffff,#e3eefc)"></div>
<div class="a" style="left:637px;top:364px;width:2px;height:2px;background:#fff;box-shadow:4px 0 0 #fff,8px 0 0 #fff,12px 0 0 #fff,16px 0 0 #fff"></div>
<div class="a" style="left:636px;top:363px;width:2px;height:2px;background:#5a86c8;box-shadow:4px 0 0 #5a86c8,8px 0 0 #5a86c8,12px 0 0 #5a86c8,16px 0 0 #5a86c8"></div>

<!-- bottom panel -->
<div class="a" style="left:299px;top:366px;width:693px;height:317px;border:1px solid #6f97d4;background:#e3eefc"></div>
<div class="t" style="left:555px;top:378px;font-size:17px;line-height:20px;font-weight:bold;color:#7f0000;letter-spacing:0.2px">Edit Row</div>
<div class="a" style="left:304px;top:407px;width:682px;height:271px;border:1px solid #7b9fd6;background:#fff"></div>
<div class="a" style="left:305px;top:408px;width:680px;height:269px;border:1px solid #a9c3ea;border-bottom:none;border-right:none"></div>
<div class="a" style="left:306px;top:409px;width:678px;height:52px;border:1px solid #6c92d3;background:#fff"></div>
<div class="a" style="left:307px;top:410px;width:135px;height:16px;background:#6a9be0"></div>
<div class="a" style="left:307px;top:427px;width:135px;height:16px;background:#c6daf5"></div>
<div class="a" style="left:307px;top:444px;width:135px;height:16px;background:#c6daf5"></div>
<div class="a" style="left:442px;top:410px;width:1px;height:50px;background:#6c92d3"></div>
<div class="a" style="left:307px;top:426px;width:676px;height:1px;background:#6c92d3"></div>
<div class="a" style="left:307px;top:443px;width:676px;height:1px;background:#6c92d3"></div>
<div class="t" style="left:322px;top:412px;color:#dce8f8">ERouting Name</div>
<div class="t" style="left:322px;top:429px">EMail Template</div>
<div class="t" style="left:322px;top:446px">Default Status</div>
<div class="t" style="left:446px;top:412px">Recall</div>
<div class="t" style="left:446px;top:429px">Recall</div>
<div class="t" style="left:446px;top:446px">Awaiting Recall Processing</div>
<!-- vertical splitter dots -->
<div class="a" style="left:295px;top:422px;width:2px;height:2px;background:#fff;box-shadow:0 4px 0 #fff,0 8px 0 #fff,0 12px 0 #fff,0 16px 0 #fff"></div>
<div class="a" style="left:294px;top:421px;width:2px;height:2px;background:#5a86c8;box-shadow:0 4px 0 #5a86c8,0 8px 0 #5a86c8,0 12px 0 #5a86c8,0 16px 0 #5a86c8"></div>


<!-- status bar -->
<div class="a" style="left:8px;top:691px;width:992px;height:23px;border-top:1px solid #6591cd;background:linear-gradient(#dbe8f9 0,#c9dcf6 5px,#b5d0f4 6px,#c8dbf4 16px,#dbe7f7 22px)"></div>
<div class="t" style="left:12px;top:697px;color:#15428b">atlas</div>


<div class="a" style="left:994px;top:700px;width:2px;height:2px;background:#fff;box-shadow:-4px 4px 0 #fff,0 4px 0 #fff,-8px 8px 0 #fff,-4px 8px 0 #fff,0 8px 0 #fff"></div>
<div class="a" style="left:993px;top:699px;width:2px;height:2px;background:#5a86c8;box-shadow:-4px 4px 0 #5a86c8,0 4px 0 #5a86c8,-8px 8px 0 #5a86c8,-4px 8px 0 #5a86c8,0 8px 0 #5a86c8"></div>
</body></html>
